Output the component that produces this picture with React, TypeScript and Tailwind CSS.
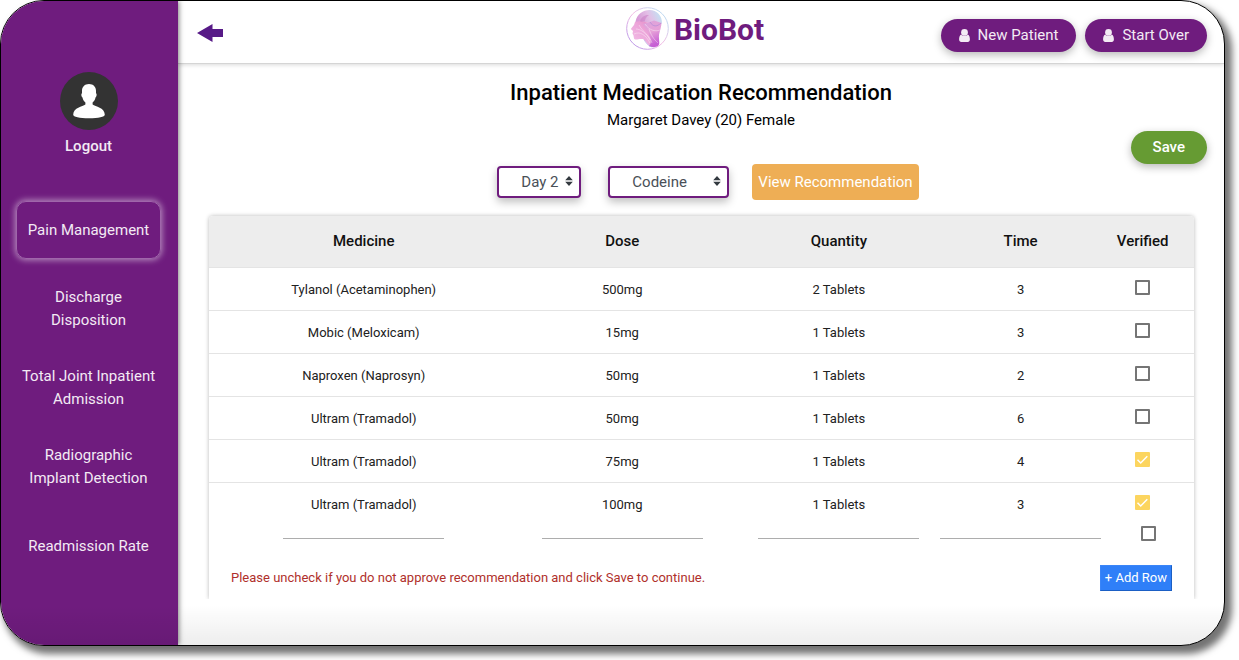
import { useState } from "react";
import type { ReactNode } from "react";

const navItems: { lines: string[]; active?: boolean }[] = [
  { lines: ["Pain Management"], active: true },
  { lines: ["Discharge", "Disposition"] },
  { lines: ["Total Joint Inpatient", "Admission"] },
  { lines: ["Radiographic", "Implant Detection"] },
  { lines: ["Readmission Rate"] },
];

const rows = [
  { medicine: "Tylanol (Acetaminophen)", dose: "500mg", quantity: "2 Tablets", time: "3", verified: false },
  { medicine: "Mobic (Meloxicam)", dose: "15mg", quantity: "1 Tablets", time: "3", verified: false },
  { medicine: "Naproxen (Naprosyn)", dose: "50mg", quantity: "1 Tablets", time: "2", verified: false },
  { medicine: "Ultram (Tramadol)", dose: "50mg", quantity: "1 Tablets", time: "6", verified: false },
  { medicine: "Ultram (Tramadol)", dose: "75mg", quantity: "1 Tablets", time: "4", verified: true },
  { medicine: "Ultram (Tramadol)", dose: "100mg", quantity: "1 Tablets", time: "3", verified: true },
];

function UserIcon() {
  return (
    <svg viewBox="0 0 11 13" className="h-[13px] w-[11px]" fill="currentColor" aria-hidden="true">
      <circle cx="5.5" cy="3.4" r="3.4" />
      <path d="M2.2 5.4C.6 6 .1 8.200.1 10.600.1 12 1 12.900 2.200 12.900H8.800C10 12.900 10.900 12 10.900 10.600 10.900 8.200 10.400 6 8.800 5.400 8 6.400 6.700 7 5.500 7 4.300 7 3 6.400 2.200 5.400Z" />
    </svg>
  );
}

function Avatar() {
  return (
    <svg viewBox="0 0 58 58" className="size-[58px]" aria-hidden="true">
      <circle cx="29" cy="29" r="29" fill="#333" />
      <path
        fill="#fff"
        d="M29 12C24.700 12 22 14.800 22 18.800V21.200C21 21.500 21.200 24.600 22.500 25.400 23 27.800 24 29.300 25.400 30.400V32.400C22.500 34.500 13.500 35.300 13.200 42.500 13.200 45 19.500 46.300 29 46.300S44.800 45 44.800 42.500C44.500 35.300 35.500 34.500 32.600 32.400V30.400C34 29.300 35 27.800 35.500 25.400 36.800 24.600 37 21.500 36 21.200V18.800C36 14.800 33.300 12 29 12Z"
      />
    </svg>
  );
}

function Logo() {
  return (
    <svg viewBox="0 0 43 43" className="size-[43px]" aria-hidden="true">
      <defs>
        <linearGradient id="ring" x1="0" y1="1" x2="1" y2="0">
          <stop offset="0" stopColor="#a98be8" />
          <stop offset="0.5" stopColor="#f3bde4" />
          <stop offset="1" stopColor="#a9e4f5" />
        </linearGradient>
        <linearGradient id="dome" x1="0" y1="0.300" x2="1" y2="0">
          <stop offset="0" stopColor="#d79ad6" />
          <stop offset="0.45" stopColor="#e3bfe6" />
          <stop offset="1" stopColor="#b9ecf7" />
        </linearGradient>
        <linearGradient id="face" x1="0" y1="1" x2="0.9" y2="0">
          <stop offset="0" stopColor="#f3c3e8" />
          <stop offset="0.6" stopColor="#eda6da" />
          <stop offset="1" stopColor="#e58ac4" />
        </linearGradient>
        <linearGradient id="neck" x1="0" y1="0" x2="0.300" y2="1">
          <stop offset="0" stopColor="#d9a3dc" />
          <stop offset="0.5" stopColor="#e7a2d8" />
          <stop offset="1" stopColor="#c65fd4" />
        </linearGradient>
      </defs>
      <circle cx="21.5" cy="21.5" r="20.800" fill="#fff" stroke="url(#ring)" strokeWidth="1" />
      <path fill="url(#dome)" d="M9.500 14.500C11 7 17 3 23.500 3 31 3.200 36 8.500 36 16L33.500 19 28 14 24 16 17 14.500 9.500 19Z" />
      <path
        fill="url(#face)"
        d="M9 15 14 14 17 14.500 24 16 21 21 27 31C29 34 28 38 26 40L22 37.500 18 32.500C14 31 9 34 8 31.500L7.500 28.500 6.500 26.500 7 24 4.800 22 8 18Z"
      />
      <path fill="url(#neck)" d="M17 17 24 15 28 13.500 35.500 16C35 23 32.500 26 33 31 33 35 34.500 38 31 39.500 28 40.500 25 40.500 23 39 28 34 22 26 17 17Z" />
      <path fill="#cb7ec4" opacity="0.550" d="M14 14.500C15 10 19 7.500 23 8 20 10 19 12.500 18.500 15Z" />
      <path
        fill="none"
        stroke="#fff"
        strokeWidth="0.5"
        opacity="0.75"
        d="M13 18C16 24 24 29 26 36M10 22C15 22 21 27 24 33M8 27C14 24 20 28 24 36M19 17C23 23 29 25 34 23M23 22C26 31 30 34 32 36"
      />
      <path fill="none" stroke="#8e7ad6" strokeWidth="0.700" opacity="0.600" d="M24 15C27 20 31 20 35 16M18 32.500C20 36 22 39 26 40" />
    </svg>
  );
}

function SortArrows() {
  return (
    <svg viewBox="0 0 8 10" className="pointer-events-none absolute top-[10px] right-2 h-[10px] w-2" fill="#343a40" aria-hidden="true">
      <path d="M4 0 7.800 4.200H.2ZM4 10 .2 5.800H7.800Z" />
    </svg>
  );
}

function Checkbox({ label, initial = false }: { label: string; initial?: boolean }) {
  const [on, setOn] = useState(initial);
  return (
    <span className="relative inline-block size-[15px] align-middle">
      <input
        type="checkbox"
        aria-label={label}
        checked={on}
        onChange={(e) => setOn(e.target.checked)}
        className="block size-[15px] appearance-none rounded-[1px] border-2 border-[#757575] bg-white checked:border-[#fcd55f] checked:bg-[#fcd55f]"
      />
      {on && (
        <svg viewBox="0 0 15 15" className="pointer-events-none absolute inset-0" fill="none" stroke="#fff" strokeWidth="1.5" aria-hidden="true">
          <path d="M2.500 7.800 5.700 11 12.300 4.300" />
        </svg>
      )}
    </span>
  );
}

function PillButton({ children }: { children: ReactNode }) {
  return (
    <button
      type="button"
      className="flex h-[33px] items-center gap-2 rounded-full bg-[#6f1c7e] px-[18px] text-[15px] text-[#f3eaf4] shadow-[0_3px_8px_rgba(0,0,0,0.28)]"
    >
      {children}
    </button>
  );
}

function Picker({ label, options, className }: { label: string; options: string[]; className: string }) {
  return (
    <div className="relative">
      <select
        aria-label={label}
        className={`block h-8 appearance-none rounded-[4px] border-2 border-[#6f1c7e] bg-white text-[15px] text-[#495057] shadow-[0_4px_8px_rgba(0,0,0,0.25)] ${className}`}
      >
        {options.map((o) => (
          <option key={o}>{o}</option>
        ))}
      </select>
      <SortArrows />
    </div>
  );
}

export default function App() {
  return (
    <div className="flex min-h-screen bg-white pr-[14px] pb-[14px] font-['Roboto',sans-serif] text-black">
      <div className="relative flex flex-1 overflow-hidden rounded-[44px] border border-black bg-white shadow-[5px_6px_7px_2px_rgba(0,0,0,0.55)]">
        <aside className="z-10 flex w-[177px] shrink-0 flex-col items-center bg-[#6f1c7e] pt-[71px] pr-[2px] text-[#f3eaf4] shadow-[1px_0_5px_rgba(0,0,0,0.5)]">
          <a href="#logout" className="flex flex-col items-center gap-[5px] text-[15px] leading-[22px] font-medium">
            <Avatar />
            Logout
          </a>
          <nav className="mt-11 flex w-full flex-col gap-[21px] px-[15px]">
            {navItems.map((item) => (
              <a
                key={item.lines[0]}
                href="#section"
                className={`flex h-[58px] flex-col items-center justify-center rounded-[10px] text-[15px] leading-[23px] whitespace-nowrap ${
                  item.active ? "border border-[#a066ab] shadow-[0_0_6px_1px_rgba(255,255,255,0.5)]" : ""
                }`}
              >
                {item.lines.map((line) => (
                  <span key={line}>{line}</span>
                ))}
              </a>
            ))}
          </nav>
        </aside>

        <div className="flex min-w-0 flex-1 flex-col">
          <header className="grid h-[63px] grid-cols-[1fr_auto_1fr] items-center border-b border-[#d5d5d5] pr-[17px] pl-[19px] shadow-[0_1px_4px_rgba(0,0,0,0.15)]">
            <button type="button" aria-label="Back" className="justify-self-start pt-[2px]">
              <svg viewBox="0 0 26 18" className="h-[18px] w-[26px]" fill="#571a87" aria-hidden="true">
                <path d="M0 9 15.500 0V5H26V13H15.500V18Z" />
              </svg>
            </button>
            <div className="flex items-center gap-[5px] pr-[14px] pb-2">
              <Logo />
              <span className="pt-1 text-[30px] leading-[40px] font-bold text-[#6f1c7e]">BioBot</span>
            </div>
            <div className="flex gap-[9px] justify-self-end pt-[6px]">
              <PillButton>
                <UserIcon />
                New Patient
              </PillButton>
              <PillButton>
                <UserIcon />
                Start Over
              </PillButton>
            </div>
          </header>

          <main className="flex flex-col">
            <div className="pt-[14px] text-center">
              <h1 className="text-[22px] leading-[30px] font-medium">Inpatient Medication Recommendation</h1>
              <p className="pt-px text-[15px] leading-[22px]">Margaret Davey (20) Female</p>
            </div>
            <div className="flex justify-end pr-[17px]">
              <button
                type="button"
                className="h-[33px] rounded-full bg-[#669b33] px-[22px] text-[15px] font-medium text-white shadow-[0_3px_8px_rgba(0,0,0,0.28)]"
              >
                Save
              </button>
            </div>
            <div className="flex items-center justify-center pl-[14px]">
              <Picker label="Day" options={["Day 2", "Day 1", "Day 3"]} className="w-[84px] pl-[22px]" />
              <div className="w-[27px]" />
              <Picker label="Medicine" options={["Codeine", "Ultram"]} className="w-[121px] pl-[22px]" />
              <div className="w-[23px]" />
              <button type="button" className="h-9 rounded-[4px] bg-[#eeae55] px-[6px] text-[15px] text-white">
                View Recommendation
              </button>
            </div>

            <div className="mt-[11px] overflow-hidden pt-[5px] pr-[30px] pl-[31px]">
              <section className="rounded-t-[4px] bg-white pb-2 shadow-[0_0_4px_rgba(0,0,0,0.28)]">
                <table className="w-full table-fixed border-collapse text-center text-[13px] text-[#212121]">
                  <colgroup>
                    <col className="w-[30.2%]" />
                    <col className="w-[23.5%]" />
                    <col className="w-[20.5%]" />
                    <col className="w-[16.4%]" />
                    <col className="w-[9.4%]" />
                  </colgroup>
                  <thead>
                    <tr className="h-[51px] bg-[#ededed] text-[15px] text-[#111]">
                      <th className="rounded-tl-[4px] pl-3 font-medium">Medicine</th>
                      <th className="font-medium">Dose</th>
                      <th className="font-medium">Quantity</th>
                      <th className="font-medium">Time</th>
                      <th className="rounded-tr-[4px] pr-[10px] font-medium">Verified</th>
                    </tr>
                  </thead>
                  <tbody>
                    {rows.map((row, i) => (
                      <tr key={i} className="h-[43px] border-t border-[#e4e4e4]">
                        <td className="pt-[2px] pl-3">{row.medicine}</td>
                        <td className="pt-[2px]">{row.dose}</td>
                        <td className="pt-[2px]">{row.quantity}</td>
                        <td className="pt-[2px]">{row.time}</td>
                        <td className="pr-[10px] pb-1">
                          <Checkbox label={`Verified: ${row.medicine} ${row.dose}`} initial={row.verified} />
                        </td>
                      </tr>
                    ))}
                    <tr className="h-4 leading-[15px]">
                      {["Medicine", "Dose", "Quantity", "Time"].map((field) => (
                        <td key={field} className="p-0 align-top first:pl-3">
                          <input
                            type="text"
                            aria-label={`New ${field}`}
                            className="mx-auto block h-[14px] w-[161px] border-b border-[#adadad] bg-transparent outline-none"
                          />
                        </td>
                      ))}
                      <td className="p-0 pl-[2px] align-top">
                        <Checkbox label="Verified: new row" />
                      </td>
                    </tr>
                  </tbody>
                </table>
                <div className="flex items-center justify-between pt-6 pr-[22px] pl-[22px]">
                  <p className="text-[13px] text-[#b0302b]">
                    Please uncheck if you do not approve recommendation and click Save to continue.
                  </p>
                  <button
                    type="button"
                    className="h-[26px] border border-t-[#3a85f8] border-r-[#1b5fc4] border-b-[#1b5fc4] border-l-[#3a85f8] bg-[#2f7ff8] px-1 text-[13px] text-white"
                  >
                    + Add Row
                  </button>
                </div>
              </section>
            </div>
          </main>
        </div>
        <div className="pointer-events-none absolute inset-x-0 bottom-0 z-20 h-10 bg-linear-to-t from-black/7 to-transparent" />
      </div>
    </div>
  );
}
